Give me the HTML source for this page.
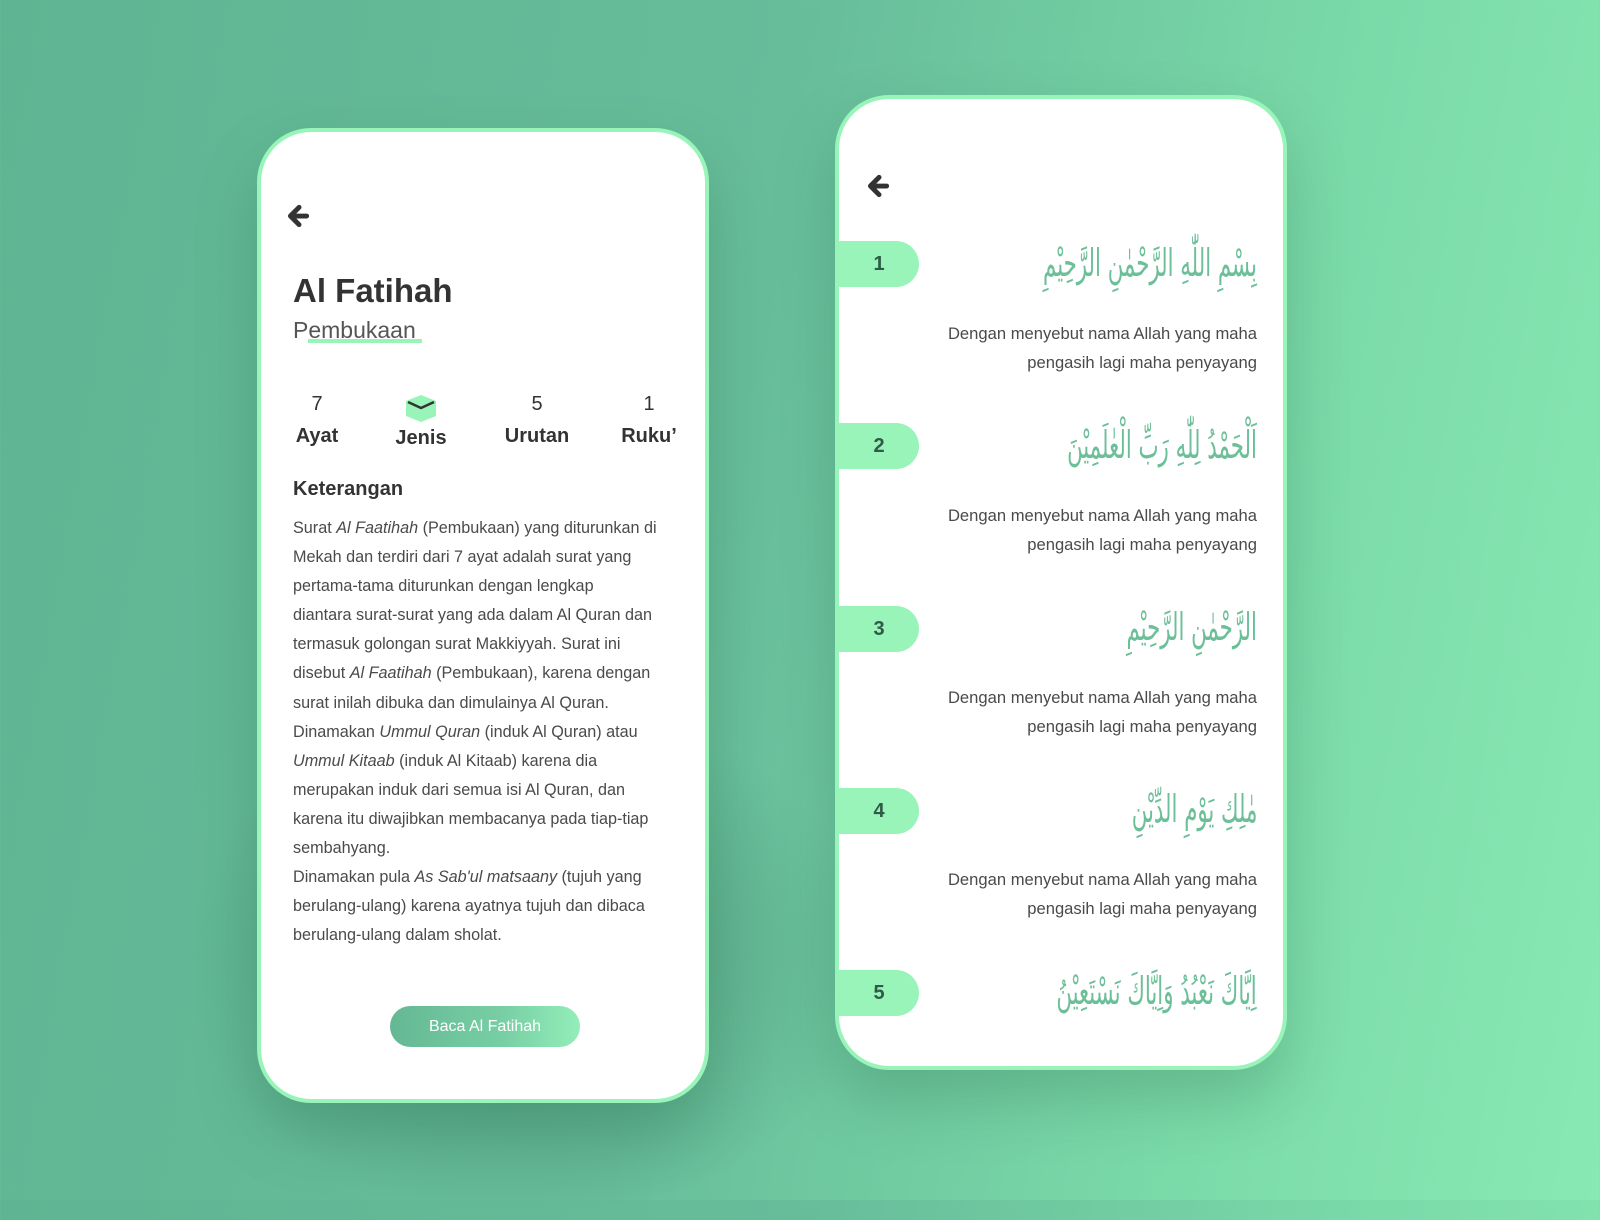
<!DOCTYPE html>
<html><head><meta charset="utf-8">
<style>
*{margin:0;padding:0;box-sizing:border-box}
body{width:1600px;height:1200px;overflow:hidden;position:relative;font-family:"Liberation Sans","DejaVu Sans",sans-serif;
background:linear-gradient(100deg,#5fb593 0%,#67bd9a 45%,#7ad9a8 75%,#89e9b4 100%);}
.shadow{position:absolute;left:180px;top:700px;width:700px;height:520px;border-radius:50%;background:radial-gradient(ellipse at center,rgba(40,100,75,.35),rgba(40,100,75,0) 70%);}
.card{position:absolute;background:#fff;border:4px solid #98f4b9;border-radius:54px;overflow:hidden;box-shadow:0 30px 60px rgba(30,90,60,.25)}
.c1{left:257px;top:128px;width:452px;height:975px}
.c2{left:835px;top:95px;width:452px;height:975px}
.abs{position:absolute}
.dark{color:#333}
.body p{font-size:16.2px;line-height:29.1px;color:#4a4a4a;white-space:nowrap}
.stat{position:absolute;width:100px;text-align:center;color:#333}
.stat .n{font-size:20px;height:32px}
.stat .l{font-size:20px;font-weight:bold}
.pill{position:absolute;left:-4px;width:84px;height:46px;background:#98f4b9;border-radius:0 23px 23px 0;text-align:center;line-height:46px;font-weight:bold;font-size:20px;color:#2f5a48;padding-left:4px}
.ar{position:absolute;right:26px;font-family:"DejaVu Sans",sans-serif;font-size:38px;color:#6cbf98;direction:rtl;white-space:nowrap;transform:scaleX(0.56);transform-origin:right center}
.tr{position:absolute;right:26px;width:380px;text-align:right;font-size:16.6px;line-height:29px;color:#4a4a4a}
</style></head><body>
<div class="shadow"></div>
<div class="card c1">
  <svg class="abs" style="left:24px;top:71px" width="26" height="26" viewBox="0 0 24 24"><path d="M13 4 L5 12 L13 20 M5.5 12 H20" stroke="#333" stroke-width="4.5" fill="none" stroke-linecap="round" stroke-linejoin="round"/></svg>
  <div class="abs dark" style="left:32px;top:140px;font-size:33px;font-weight:bold">Al Fatihah</div>
  <div class="abs" style="left:47px;top:207px;width:114px;height:4px;background:#98f4b9"></div>
  <div class="abs" style="left:32px;top:185px;font-size:23px;color:#555">Pembukaan</div>
  <div class="stat" style="left:6px;top:261px"><div class="n">7</div><div class="l">Ayat</div></div>
  <div class="stat" style="left:110px;top:261px"><div class="n"><svg width="32" height="30" viewBox="0 0 32 30"><path d="M16 2 L31 8 V23 L16 29 L1 23 V8 Z" fill="#98f4b9"/><path d="M3 9 L16 15 L29 9" stroke="#333" stroke-width="2.5" fill="none"/></svg></div><div class="l" style="margin-top:2px">Jenis</div></div>
  <div class="stat" style="left:226px;top:261px"><div class="n">5</div><div class="l">Urutan</div></div>
  <div class="stat" style="left:338px;top:261px"><div class="n">1</div><div class="l">Ruku’</div></div>
  <div class="abs dark" style="left:32px;top:346px;font-size:20px;font-weight:bold">Keterangan</div>
  <div class="abs body" style="left:32px;top:382px;width:400px"><p>Surat <i>Al Faatihah</i> (Pembukaan) yang diturunkan di<br>Mekah dan terdiri dari 7 ayat adalah surat yang<br>pertama-tama diturunkan dengan lengkap<br>diantara surat-surat yang ada dalam Al Quran dan<br>termasuk golongan surat Makkiyyah. Surat ini<br>disebut <i>Al Faatihah</i> (Pembukaan), karena dengan<br>surat inilah dibuka dan dimulainya Al Quran.<br>Dinamakan <i>Ummul Quran</i> (induk Al Quran) atau<br><i>Ummul Kitaab</i> (induk Al Kitaab) karena dia<br>merupakan induk dari semua isi Al Quran, dan<br>karena itu diwajibkan membacanya pada tiap-tiap<br>sembahyang.<br>Dinamakan pula <i>As Sab'ul matsaany</i> (tujuh yang<br>berulang-ulang) karena ayatnya tujuh dan dibaca<br>berulang-ulang dalam sholat.</p></div>
  <div class="abs" style="left:129px;top:874px;width:190px;height:41px;border-radius:21px;background:linear-gradient(90deg,#64b894,#78cfa4 60%,#92eeb9);color:#fff;font-size:16px;text-align:center;line-height:41px">Baca Al Fatihah</div>
</div>
<div class="card c2">
  <svg class="abs" style="left:26px;top:74px" width="26" height="26" viewBox="0 0 24 24"><path d="M13 4 L5 12 L13 20 M5.5 12 H20" stroke="#333" stroke-width="4.5" fill="none" stroke-linecap="round" stroke-linejoin="round"/></svg>

  <div class="pill" style="top:142px">1</div>
  <div class="ar" style="top:142px">بِسْمِ اللّٰهِ الرَّحْمٰنِ الرَّحِيْمِ</div>
  <div class="tr" style="top:220px">Dengan menyebut nama Allah yang maha pengasih lagi maha penyayang</div>

  <div class="pill" style="top:324px">2</div>
  <div class="ar" style="top:324px">اَلْحَمْدُ لِلّٰهِ رَبِّ الْعٰلَمِيْنَ</div>
  <div class="tr" style="top:402px">Dengan menyebut nama Allah yang maha pengasih lagi maha penyayang</div>

  <div class="pill" style="top:507px">3</div>
  <div class="ar" style="top:506px">الرَّحْمٰنِ الرَّحِيْمِ</div>
  <div class="tr" style="top:584px">Dengan menyebut nama Allah yang maha pengasih lagi maha penyayang</div>

  <div class="pill" style="top:689px">4</div>
  <div class="ar" style="top:688px">مٰلِكِ يَوْمِ الدِّيْنِ</div>
  <div class="tr" style="top:766px">Dengan menyebut nama Allah yang maha pengasih lagi maha penyayang</div>

  <div class="pill" style="top:871px">5</div>
  <div class="ar" style="top:870px">اِيَّاكَ نَعْبُدُ وَاِيَّاكَ نَسْتَعِيْنُ</div>
</div>
</body></html>
